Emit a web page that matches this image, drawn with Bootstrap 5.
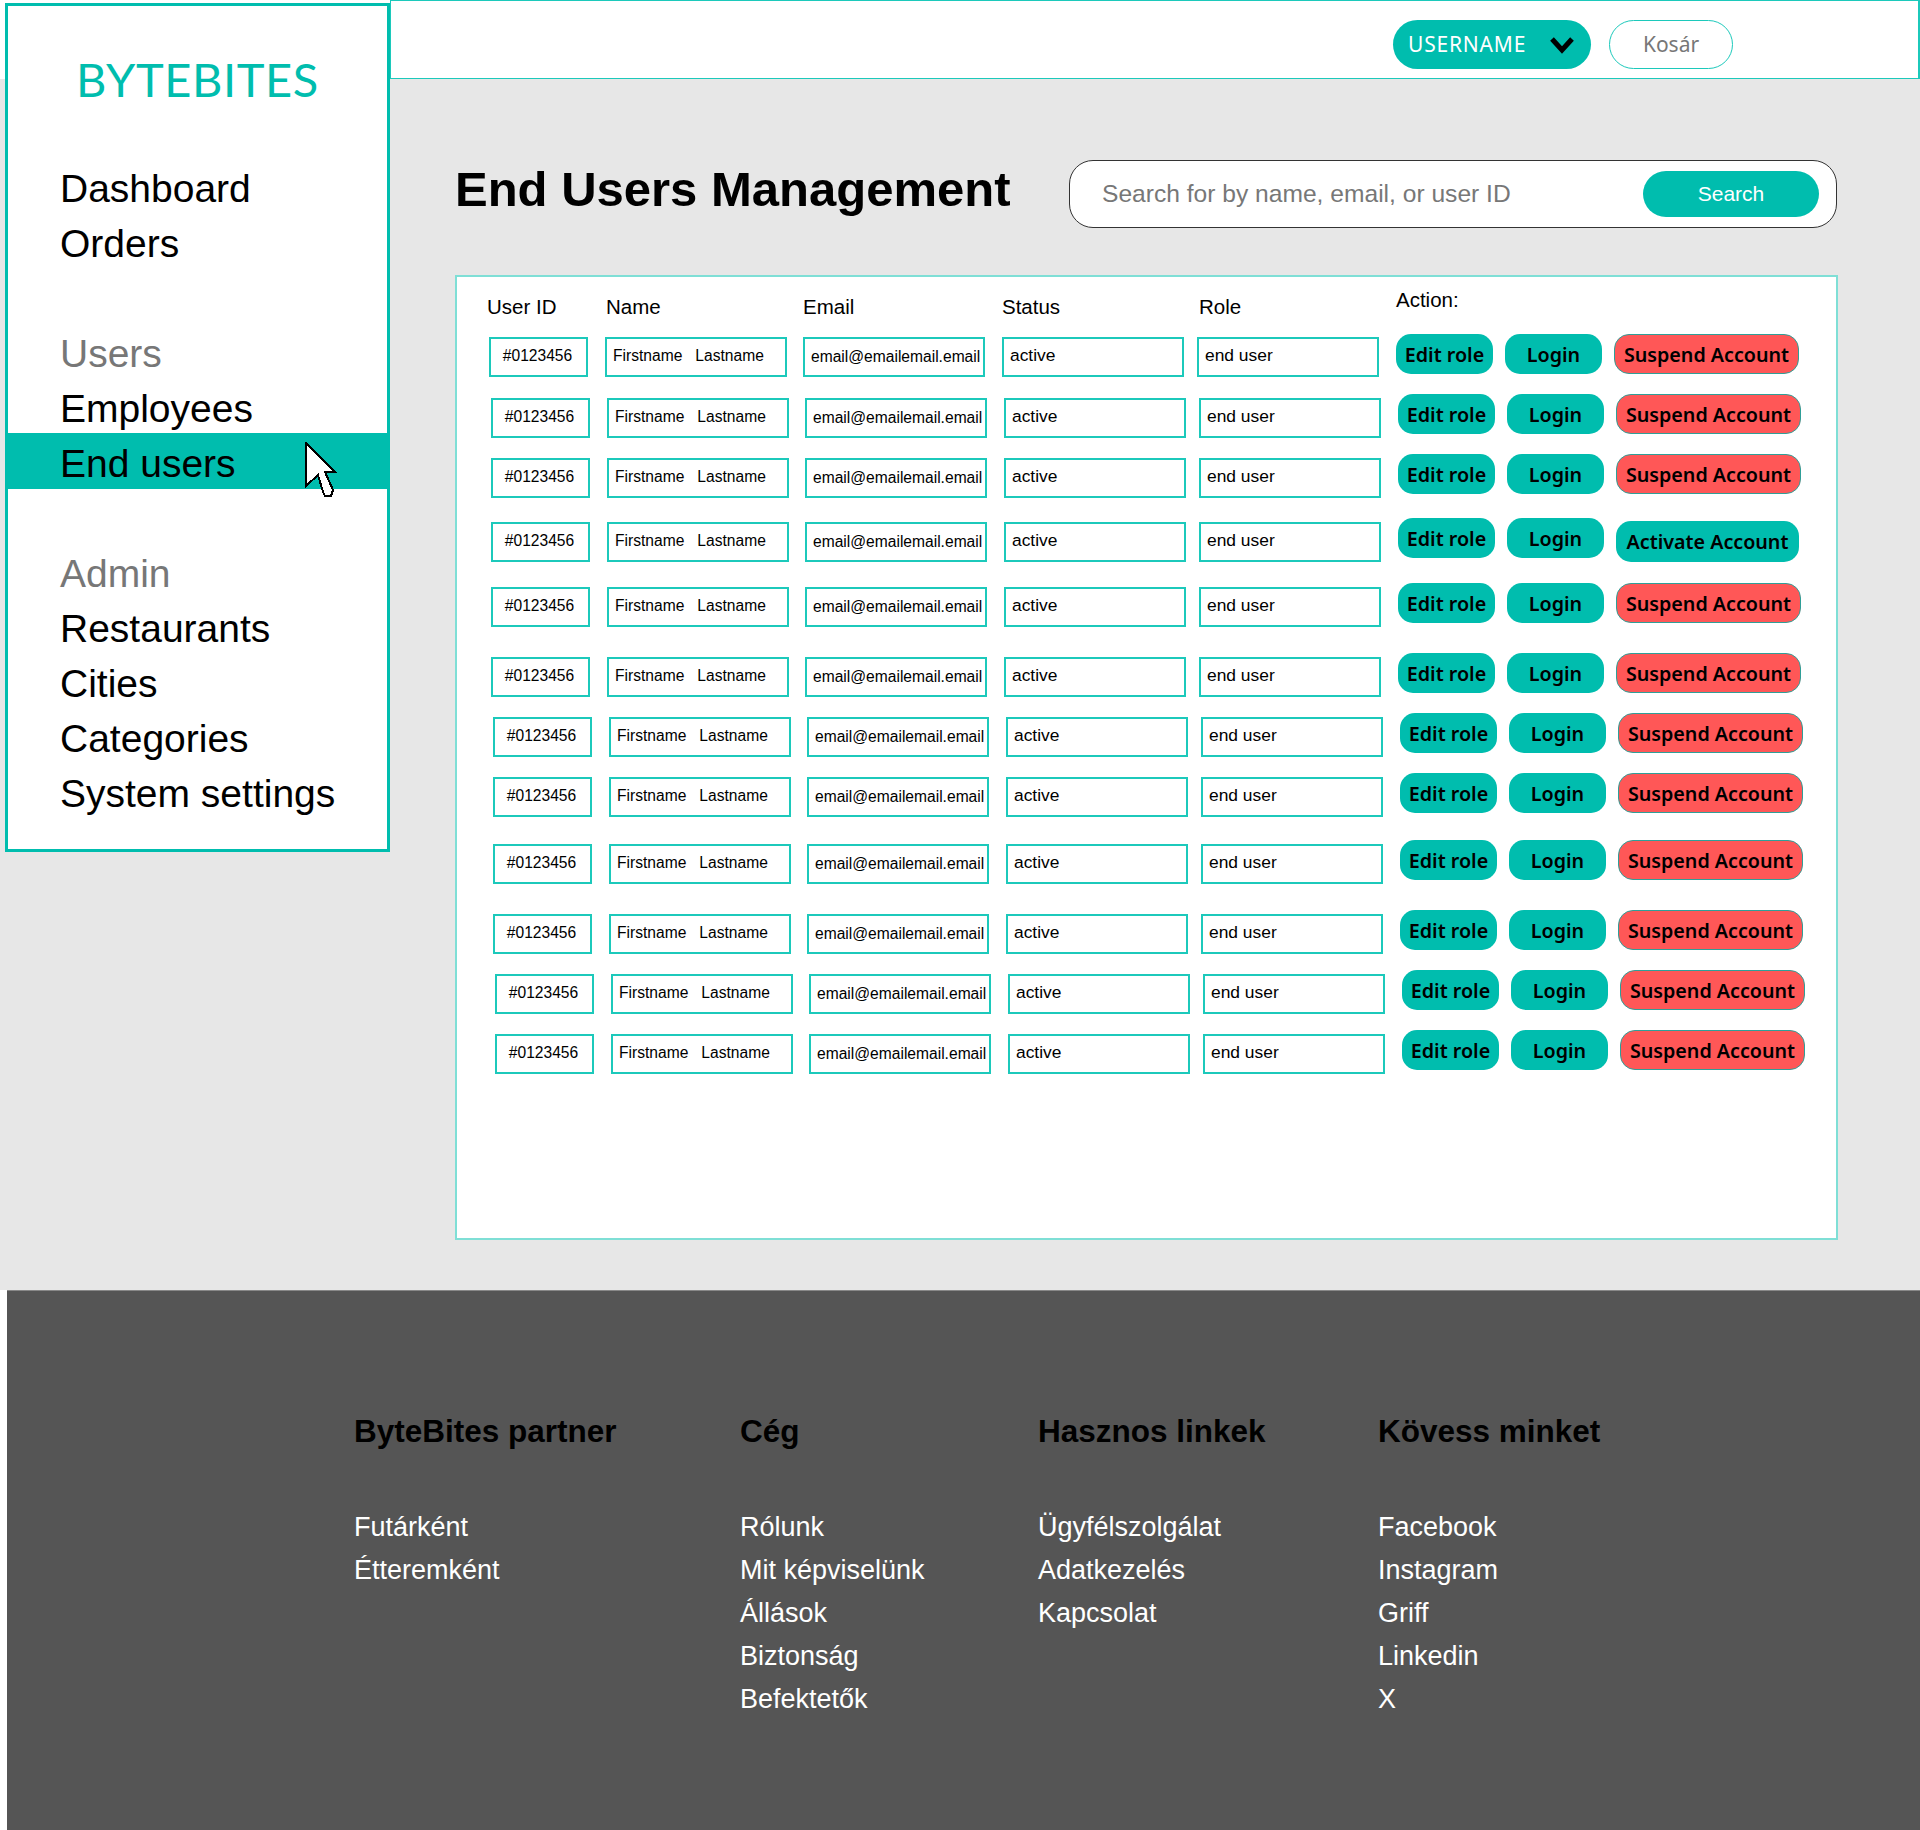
<!DOCTYPE html>
<html lang="hu">

<head>
    <meta charset="UTF-8">
    <meta name="viewport" content="width=device-width, initial-scale=1.0">
    <title>End Users Management</title>

    <link href="https://cdn.jsdelivr.net/npm/bootstrap@5.3.3/dist/css/bootstrap.min.css" rel="stylesheet">

    <style>
        :root { --teal: #00bdae; --teal-line: #1cc9bb; }
        body { font-family: "Liberation Sans", Arial, sans-serif; color: #000; background: #fff; }

        .page-top { height: 1290px; background: linear-gradient(#fff 79px, #e7e7e7 79px); }

        /* sidebar */
        .side-box { width: 385px; height: 849px; margin: 3px 0 0 5px; background: #fff; border: 3px solid var(--teal); flex-shrink: 0; }
        .brand-txt { font-family: Lato, sans-serif; font-size: 47px; line-height: 56px; color: var(--teal); text-align: center; margin: 45px 0 0; letter-spacing: .6px; }
        .side-nav { margin-top: 54px; font-size: 39px; line-height: 55px; }
        .side-nav a { display: block; padding-left: 52px; color: #000; text-decoration: none; }
        .side-nav .side-head { color: #777; padding-left: 52px; }
        .side-nav .side-gap { height: 55px; }
        .side-nav a.side-active { background: var(--teal); margin: -3px -3px 2px; padding: 5px 0 0 55px; line-height: 51px; position: relative; }
        .cursor-ic { position: absolute; left: 300px; top: 9px; }

        /* top bar */
        .top-bar { height: 79px; background: #fff; border-style: solid; border-color: var(--teal-line); border-width: 1px 2px 1px 1px; padding: 10px 185px 0 0; gap: 18px; }
        .user-btn, .cart-btn { height: 49px; font-family: "Noto Sans", sans-serif; font-size: 21px; }
        .user-btn { width: 198px; background: var(--teal); color: #fff; border: 0; padding: 0 16px 0 15px; letter-spacing: .8px; }
        .user-btn:hover { background: var(--teal); color: #fff; }
        .cart-btn { width: 124px; background: #fff; color: #777; border: 1px solid var(--teal-line); }

        /* title + search */
        .main-col { padding: 0 83px 0 65px; }
        .title-row { margin-top: 81px; }
        .page-title { font-size: 49px; font-weight: 700; line-height: 48px; margin: 0 0 10px; }
        .search-box { width: 768px; height: 68px; background: #fff; border: 1px solid #333; border-radius: 24px; padding: 0 17px 0 32px; }
        .search-box input { border: 0; padding: 0; font-size: 24.6px; color: #777; background: transparent; box-shadow: none; }
        .search-box input::placeholder { color: #777; opacity: 1; }
        .search-go { width: 176px; height: 46px; background: var(--teal); color: #fff; border: 0; border-radius: 23px; font-size: 21px; padding: 0; }
        .search-go:hover { background: var(--teal); color: #fff; }

        /* users panel */
        .users-panel { height: 965px; margin: 47px -1px 0 0; background: #fff; border: 2px solid #7fdfd6; border-radius: 0; padding: 0 0 0 32px; }
        .head-row { height: 56px; margin-left: -2px; font-size: 20.5px; line-height: 24px; }
        .hd-cell { padding-top: 18px; flex-shrink: 0; }
        .hd-id { width: 119px; }
        .hd-name { width: 197px; }
        .hd-mail { width: 199px; }
        .hd-stat { width: 197px; }
        .hd-role { width: 197px; }
        .hd-act { padding-top: 11px; }
        .usr-row { height: 44px; }
        .usr-row:nth-child(2) { margin-top: 17px; margin-left: 2px; }
        .usr-row:nth-child(3) { margin-top: 16px; margin-left: 2px; }
        .usr-row:nth-child(4) { margin-top: 20px; margin-left: 2px; }
        .usr-row:nth-child(5) { margin-top: 21px; margin-left: 2px; }
        .usr-row:nth-child(6) { margin-top: 26px; margin-left: 2px; }
        .usr-row:nth-child(7) { margin-top: 16px; margin-left: 4px; }
        .usr-row:nth-child(8) { margin-top: 16px; margin-left: 4px; }
        .usr-row:nth-child(9) { margin-top: 23px; margin-left: 4px; }
        .usr-row:nth-child(10) { margin-top: 26px; margin-left: 4px; }
        .usr-row:nth-child(11) { margin-top: 16px; margin-left: 6px; }
        .usr-row:nth-child(12) { margin-top: 16px; margin-left: 6px; }
        .usr-row:first-child .act-btn { margin-top: 1px; }

        .c-id, .c-name, .c-mail, .c-stat, .c-role { height: 40px; border: 2px solid var(--teal-line); background: #fff; margin-top: 4px; font-size: 15.6px; line-height: 34px; white-space: pre; flex-shrink: 0; }
        .c-id { width: 99px; margin-right: 17px; text-align: center; padding-right: 2px; }
        .c-name { width: 182px; margin-right: 16px; padding-left: 6px; }
        .c-mail { width: 182px; margin-right: 17px; padding-left: 6px; line-height: 36px; }
        .c-stat { width: 182px; margin-right: 13px; padding-left: 6px; font-size: 17.4px; line-height: 32px; }
        .c-role { width: 182px; margin-right: 17px; padding-left: 6px; font-size: 17.4px; line-height: 32px; }
        .act-btn { height: 40px; width: 97px; margin-right: 12px; padding: 1px 0 0; background: var(--teal); color: #000; border: 0; border-radius: 15px; font-family: "Noto Sans", sans-serif; font-weight: 600; font-size: 19.7px; line-height: 36px; flex-shrink: 0; }
        .act-btn:hover { background: var(--teal); color: #000; }
        .act-btn.act-wide { width: 185px; margin-right: 0; background: #ff5757; border: 1px solid #2f9f98; }
        .act-btn.act-wide:hover { background: #ff5757; }
        .act-btn.act-on { width: 183px; height: 41px; margin: 3px 0 0; background: var(--teal); border: 0; }
        .act-btn.act-on:hover { background: var(--teal); }

        /* footer */
        .site-foot { height: 540px; margin-left: 7px; background: #555; border-top: 1px solid #888; padding: 120px 0 0 347px; }
        .foot-col { flex-shrink: 0; }
        .foot-col:nth-child(1) { width: 386px; }
        .foot-col:nth-child(2) { width: 298px; }
        .foot-col:nth-child(3) { width: 340px; }
        .foot-title { font-size: 31.5px; font-weight: 700; line-height: 40px; color: #000; margin: 0 0 55px; }
        .foot-col ul { font-size: 27px; line-height: 43px; }
        .foot-col a { color: #fff; text-decoration: none; }
    </style>
</head>

<body>
    <div class="page-top d-flex align-items-start">
        <aside class="side-box">
            <p class="brand-txt">BYTEBITES</p>
            <nav class="side-nav">
                <a href="#">Dashboard</a>
                <a href="#">Orders</a>
                <div class="side-gap"></div>
                <div class="side-head">Users</div>
                <a href="#">Employees</a>
                <a href="#" class="side-active">End users
                    <svg class="cursor-ic" width="32" height="56" viewBox="0 0 32 56" shape-rendering="crispEdges">
                        <polygon points="1,1 1,44 13,33 18,50 20,54 26,54 28,48 20,30 30,30" fill="#fff" stroke="#000" stroke-width="2"/>
                    </svg>
                </a>
                <div class="side-gap"></div>
                <div class="side-head">Admin</div>
                <a href="#">Restaurants</a>
                <a href="#">Cities</a>
                <a href="#">Categories</a>
                <a href="#">System settings</a>
            </nav>
        </aside>

        <div class="flex-grow-1">
            <header class="top-bar d-flex align-items-center justify-content-end">
                <button type="button" class="btn user-btn rounded-pill d-flex align-items-center justify-content-between">
                    USERNAME
                    <svg width="26" height="18" viewBox="0 0 26 18"><polyline points="3,3 13,14 23,3" fill="none" stroke="#000" stroke-width="5"/></svg>
                </button>
                <a href="#" class="btn cart-btn rounded-pill d-flex align-items-center justify-content-center">Kosár</a>
            </header>

            <main class="main-col">
                <div class="title-row d-flex align-items-center justify-content-between">
                    <h1 class="page-title">End Users Management</h1>
                    <form class="search-box d-flex align-items-center">
                        <input type="text" class="form-control" placeholder="Search for by name, email, or user ID">
                        <button type="button" class="btn search-go flex-shrink-0">Search</button>
                    </form>
                </div>

                <section class="card users-panel">
                    <div class="head-row d-flex">
                        <div class="hd-cell hd-id">User ID</div>
                        <div class="hd-cell hd-name">Name</div>
                        <div class="hd-cell hd-mail">Email</div>
                        <div class="hd-cell hd-stat">Status</div>
                        <div class="hd-cell hd-role">Role</div>
                        <div class="hd-cell hd-act">Action:</div>
                    </div>
                    <div>
                        <div class="usr-row d-flex"><div class="c-id">#0123456</div><div class="c-name">Firstname   Lastname</div><div class="c-mail">email@emailemail.email</div><div class="c-stat">active</div><div class="c-role">end user</div><button class="btn act-btn">Edit role</button><button class="btn act-btn">Login</button><button class="btn act-btn act-wide">Suspend Account</button></div>
                        <div class="usr-row d-flex"><div class="c-id">#0123456</div><div class="c-name">Firstname   Lastname</div><div class="c-mail">email@emailemail.email</div><div class="c-stat">active</div><div class="c-role">end user</div><button class="btn act-btn">Edit role</button><button class="btn act-btn">Login</button><button class="btn act-btn act-wide">Suspend Account</button></div>
                        <div class="usr-row d-flex"><div class="c-id">#0123456</div><div class="c-name">Firstname   Lastname</div><div class="c-mail">email@emailemail.email</div><div class="c-stat">active</div><div class="c-role">end user</div><button class="btn act-btn">Edit role</button><button class="btn act-btn">Login</button><button class="btn act-btn act-wide">Suspend Account</button></div>
                        <div class="usr-row d-flex"><div class="c-id">#0123456</div><div class="c-name">Firstname   Lastname</div><div class="c-mail">email@emailemail.email</div><div class="c-stat">active</div><div class="c-role">end user</div><button class="btn act-btn">Edit role</button><button class="btn act-btn">Login</button><button class="btn act-btn act-on">Activate Account</button></div>
                        <div class="usr-row d-flex"><div class="c-id">#0123456</div><div class="c-name">Firstname   Lastname</div><div class="c-mail">email@emailemail.email</div><div class="c-stat">active</div><div class="c-role">end user</div><button class="btn act-btn">Edit role</button><button class="btn act-btn">Login</button><button class="btn act-btn act-wide">Suspend Account</button></div>
                        <div class="usr-row d-flex"><div class="c-id">#0123456</div><div class="c-name">Firstname   Lastname</div><div class="c-mail">email@emailemail.email</div><div class="c-stat">active</div><div class="c-role">end user</div><button class="btn act-btn">Edit role</button><button class="btn act-btn">Login</button><button class="btn act-btn act-wide">Suspend Account</button></div>
                        <div class="usr-row d-flex"><div class="c-id">#0123456</div><div class="c-name">Firstname   Lastname</div><div class="c-mail">email@emailemail.email</div><div class="c-stat">active</div><div class="c-role">end user</div><button class="btn act-btn">Edit role</button><button class="btn act-btn">Login</button><button class="btn act-btn act-wide">Suspend Account</button></div>
                        <div class="usr-row d-flex"><div class="c-id">#0123456</div><div class="c-name">Firstname   Lastname</div><div class="c-mail">email@emailemail.email</div><div class="c-stat">active</div><div class="c-role">end user</div><button class="btn act-btn">Edit role</button><button class="btn act-btn">Login</button><button class="btn act-btn act-wide">Suspend Account</button></div>
                        <div class="usr-row d-flex"><div class="c-id">#0123456</div><div class="c-name">Firstname   Lastname</div><div class="c-mail">email@emailemail.email</div><div class="c-stat">active</div><div class="c-role">end user</div><button class="btn act-btn">Edit role</button><button class="btn act-btn">Login</button><button class="btn act-btn act-wide">Suspend Account</button></div>
                        <div class="usr-row d-flex"><div class="c-id">#0123456</div><div class="c-name">Firstname   Lastname</div><div class="c-mail">email@emailemail.email</div><div class="c-stat">active</div><div class="c-role">end user</div><button class="btn act-btn">Edit role</button><button class="btn act-btn">Login</button><button class="btn act-btn act-wide">Suspend Account</button></div>
                        <div class="usr-row d-flex"><div class="c-id">#0123456</div><div class="c-name">Firstname   Lastname</div><div class="c-mail">email@emailemail.email</div><div class="c-stat">active</div><div class="c-role">end user</div><button class="btn act-btn">Edit role</button><button class="btn act-btn">Login</button><button class="btn act-btn act-wide">Suspend Account</button></div>
                        <div class="usr-row d-flex"><div class="c-id">#0123456</div><div class="c-name">Firstname   Lastname</div><div class="c-mail">email@emailemail.email</div><div class="c-stat">active</div><div class="c-role">end user</div><button class="btn act-btn">Edit role</button><button class="btn act-btn">Login</button><button class="btn act-btn act-wide">Suspend Account</button></div>
                    </div>
                </section>
            </main>
        </div>
    </div>

    <footer class="site-foot d-flex">
        <div class="foot-col">
            <h5 class="foot-title">ByteBites partner</h5>
            <ul class="list-unstyled">
                <li><a href="#">Futárként</a></li>
                <li><a href="#">Étteremként</a></li>
            </ul>
        </div>
        <div class="foot-col">
            <h5 class="foot-title">Cég</h5>
            <ul class="list-unstyled">
                <li><a href="#">Rólunk</a></li>
                <li><a href="#">Mit képviselünk</a></li>
                <li><a href="#">Állások</a></li>
                <li><a href="#">Biztonság</a></li>
                <li><a href="#">Befektetők</a></li>
            </ul>
        </div>
        <div class="foot-col">
            <h5 class="foot-title">Hasznos linkek</h5>
            <ul class="list-unstyled">
                <li><a href="#">Ügyfélszolgálat</a></li>
                <li><a href="#">Adatkezelés</a></li>
                <li><a href="#">Kapcsolat</a></li>
            </ul>
        </div>
        <div class="foot-col">
            <h5 class="foot-title">Kövess minket</h5>
            <ul class="list-unstyled">
                <li><a href="#">Facebook</a></li>
                <li><a href="#">Instagram</a></li>
                <li><a href="#">Griff</a></li>
                <li><a href="#">Linkedin</a></li>
                <li><a href="#">X</a></li>
            </ul>
        </div>
    </footer>

    <script src="https://cdn.jsdelivr.net/npm/bootstrap@5.3.3/dist/js/bootstrap.bundle.min.js"></script>
</body>

</html>
